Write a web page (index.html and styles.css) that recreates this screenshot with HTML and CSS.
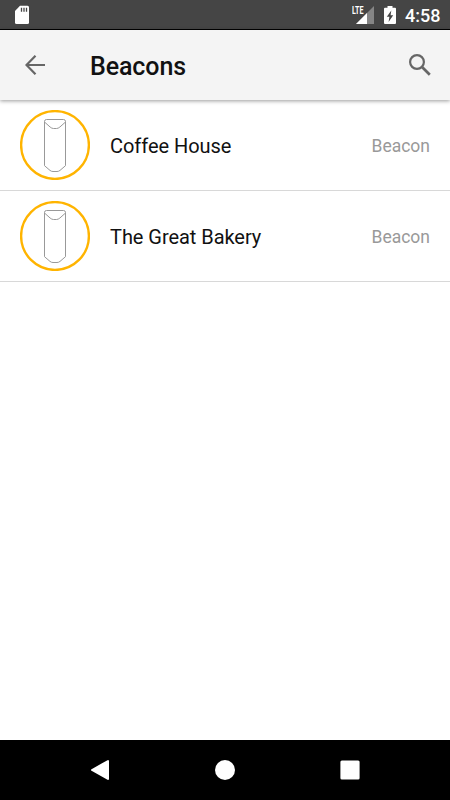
FILE: index.html
```html
<!DOCTYPE html>
<html lang="en">
<head>
<meta charset="utf-8">
<title>Beacons</title>
<link rel="stylesheet" href="styles.css">
</head>
<body>
<div class="screen">
  <div class="status">
    <svg class="sd" width="16" height="20" viewBox="0 0 16 20"><path fill="#fff" d="M6 .7h7.500q1.500 0 1.500 1.500v15.300q0 1.500-1.500 1.500H2.500Q1 19 1 17.500V6z"/><path stroke="#454545" stroke-width="1.300" d="M7.500 2.800v4M10 2.800v4M12.500 2.800v4"/></svg>
    <div class="status-right">
      <div class="signal">
        <span class="lte">LTE</span>
        <svg width="18" height="18" viewBox="0 0 18 18"><path fill="#858585" d="M18 0v18H0z"/><path fill="#fff" d="M11 7v11H0z"/></svg>
      </div>
      <svg class="battery" width="12" height="18" viewBox="0 0 12 18"><path fill="#fff" d="M3.500 0h5v1.700H11q1 0 1 1V17q0 1-1 1H1q-1 0-1-1V2.700q0-1 1-1h2.500z"/><path fill="#454545" d="M7.300 4.500 2.800 10.700H5.400L4.600 16 9.200 9.300H6.600z"/></svg>
      <span class="time">4:58</span>
    </div>
  </div>
  <header class="bar">
    <svg class="back" width="20" height="20" viewBox="0 0 20 20" fill="none" stroke="#666" stroke-width="2.200"><path d="M20 10H2M10.500.8 1.500 10l9 9.200"/></svg>
    <h1>Beacons</h1>
    <svg class="search" width="22" height="22" viewBox="0 0 22 22" fill="none" stroke="#666"><circle cx="8" cy="8" r="6.900" stroke-width="2.200"/><path stroke-width="2.700" d="m13.300 13.300 7.500 7.500"/></svg>
  </header>
  <main class="list">
    <div class="row">
      <svg class="avatar" width="70" height="70" viewBox="0 0 70 70" fill="none"><circle cx="35" cy="35" r="33.900" stroke="#ffb400" stroke-width="2.400"/><path stroke="#999" stroke-width="1" d="M24.500 11.500q0-2 2-2h17q2 0 2 2v44.200l-5.500 4.700q-1.300 1.100-3 1.100h-4q-1.700 0-3-1.100l-5.500-4.700zM24.500 12l5.600 5q1.700 1.500 3.400 1.500h3q1.700 0 3.400-1.500l5.600-5"/></svg>
      <span class="name">Coffee House</span>
      <span class="kind">Beacon</span>
    </div>
    <div class="row">
      <svg class="avatar" width="70" height="70" viewBox="0 0 70 70" fill="none"><circle cx="35" cy="35" r="33.900" stroke="#ffb400" stroke-width="2.400"/><path stroke="#999" stroke-width="1" d="M24.500 11.500q0-2 2-2h17q2 0 2 2v44.200l-5.500 4.700q-1.300 1.100-3 1.100h-4q-1.700 0-3-1.100l-5.500-4.700zM24.500 12l5.600 5q1.700 1.500 3.400 1.500h3q1.700 0 3.400-1.500l5.600-5"/></svg>
      <span class="name">The Great Bakery</span>
      <span class="kind">Beacon</span>
    </div>
  </main>
  <nav class="nav">
    <svg width="20" height="22" viewBox="0 0 20 22"><path fill="#fff" stroke="#fff" stroke-width="2" stroke-linejoin="round" d="M18 2v18L2 11z"/></svg>
    <svg width="20" height="20" viewBox="0 0 20 20"><circle cx="10" cy="10" r="10" fill="#fff"/></svg>
    <svg width="20" height="20" viewBox="0 0 20 20"><rect x=".4" y=".4" width="19.200" height="19.200" rx="1.500" fill="#fff"/></svg>
  </nav>
</div>
</body>
</html>
```
FILE: styles.css
```css
* { box-sizing: border-box; }
body { margin: 0; background: #fff; font-family: Roboto, "Liberation Sans", sans-serif; }
svg { display: block; flex: none; }
.screen { height: 800px; display: flex; flex-direction: column; }
.status { height: 30px; background: #454545; border-bottom: 1px solid #000; display: flex; justify-content: space-between; padding: 5px 10px 0 14px; color: #fff; }
.status-right { display: flex; }
.signal { width: 23px; padding: 1px 0 0 5px; position: relative; }
.lte { position: absolute; left: 1px; top: 0; font-size: 11px; line-height: 11px; font-weight: 700; transform: scaleX(.65); transform-origin: left; }
.battery { margin: 1px 0 0 10px; }
.time { width: 35px; margin-left: 9px; font-size: 18px; line-height: 21px; font-weight: 500; white-space: nowrap; }
.bar { height: 70px; flex: none; display: flex; align-items: center; background: #f4f4f4; padding: 0 19px 0 25px; box-shadow: 0 1px 4px rgba(0,0,0,.4); position: relative; }
.bar h1 { margin: 4px 0 0 45px; font-size: 25px; letter-spacing: -.1px; line-height: 30px; font-weight: 500; color: #111; }
.search { margin-left: auto; }
.list { flex: 1; }
.row { height: 91px; display: flex; align-items: center; padding: 0 20px; border-bottom: 1px solid #d8d8d8; }
.name { margin: 1px 0 0 20px; font-size: 20px; letter-spacing: -.05px; line-height: 24px; color: #111; }
.kind { margin: 2px 0 0 auto; font-size: 17.500px; line-height: 22px; color: #999; }
.nav { height: 60px; background: #000; display: flex; align-items: center; justify-content: space-between; padding: 0 90px; }
```
